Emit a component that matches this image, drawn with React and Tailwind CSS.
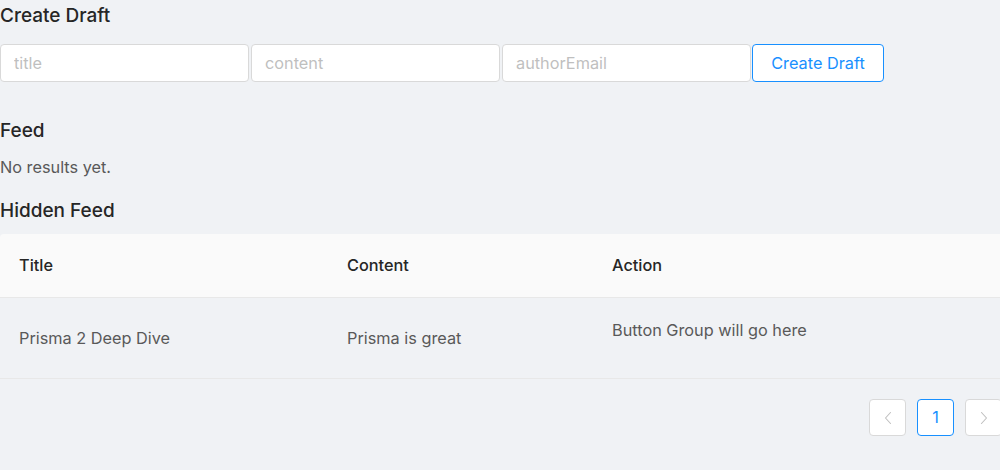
const rows = [
  { title: "Prisma 2 Deep Dive", content: "Prisma is great" },
];

function Chevron({ dir }) {
  return (
    <svg width="12" height="14" viewBox="0 0 12 14" fill="none">
      <path
        d={dir === "left" ? "M8.5 1.5 L3.5 7 L8.5 12.5" : "M3.5 1.5 L8.5 7 L3.5 12.5"}
        stroke="currentColor"
        strokeWidth="1.1"
        strokeLinecap="round"
        strokeLinejoin="round"
      />
    </svg>
  );
}

export default function App() {
  return (
    <div
      className="w-full h-[470px] overflow-hidden bg-[#f0f2f5] text-[16.3px]"
      style={{ fontFamily: "Inter, 'Noto Sans', sans-serif" }}
    >
      <div className="w-[1004px]">
        <h3 className="mt-[2px] text-[19px] leading-[27px] font-medium text-[#262626]">
          Create Draft
        </h3>

        {/* draft form */}
        <div className="mt-[15px] flex items-center gap-[2px]">
          {["title", "content", "authorEmail"].map((p) => (
            <input
              key={p}
              placeholder={p}
              className="w-[249px] h-[38px] rounded-[4px] border border-[#d9d9d9] bg-white px-[13px] text-[16.3px] text-[#595959] placeholder:text-[#bfbfbf] outline-none"
            />
          ))}
          <button className="ml-[-1px] w-[132px] h-[38px] rounded-[4px] border border-[#1890ff] bg-white text-[16.3px] text-[#1890ff]">
            Create Draft
          </button>
        </div>

        <h3 className="mt-[35px] text-[19px] leading-[27px] font-medium text-[#262626]">
          Feed
        </h3>
        <p className="mt-[11px] leading-[24px] text-[#595959]">No results yet.</p>

        <h3 className="mt-[18px] text-[19px] leading-[27px] font-medium text-[#262626]">
          Hidden Feed
        </h3>

        {/* table */}
        <div className="mt-[10px]">
          <div className="grid grid-cols-[328px_265px_1fr] h-[64px] items-center bg-[#fafafa] border-b border-[#e8e8e8] rounded-t-[4px] text-[#262626] font-medium">
            <div className="pl-[19px]">Title</div>
            <div className="pl-[19px]">Content</div>
            <div className="pl-[19px]">Action</div>
          </div>
          {rows.map((r, i) => (
            <div
              key={i}
              className="grid grid-cols-[328px_265px_1fr] h-[81px] items-center border-b border-[#e8e8e8] text-[#595959]"
            >
              <div className="pl-[19px]">{r.title}</div>
              <div className="pl-[19px]">{r.content}</div>
              <div className="pl-[19px] self-start pt-[20px]">Button Group will go here</div>
            </div>
          ))}

          {/* pagination */}
          <div className="mt-[20px] flex justify-end gap-[11px] pr-[2px]">
            <button className="w-[37px] h-[37px] rounded-[4px] border border-[#d9d9d9] bg-white text-[#bfbfbf] flex items-center justify-center">
              <Chevron dir="left" />
            </button>
            <button className="w-[37px] h-[37px] rounded-[4px] border border-[#1890ff] bg-white text-[#1890ff] flex items-center justify-center">
              1
            </button>
            <button className="w-[37px] h-[37px] rounded-[4px] border border-[#d9d9d9] bg-white text-[#bfbfbf] flex items-center justify-center">
              <Chevron dir="right" />
            </button>
          </div>
        </div>
      </div>
    </div>
  );
}
